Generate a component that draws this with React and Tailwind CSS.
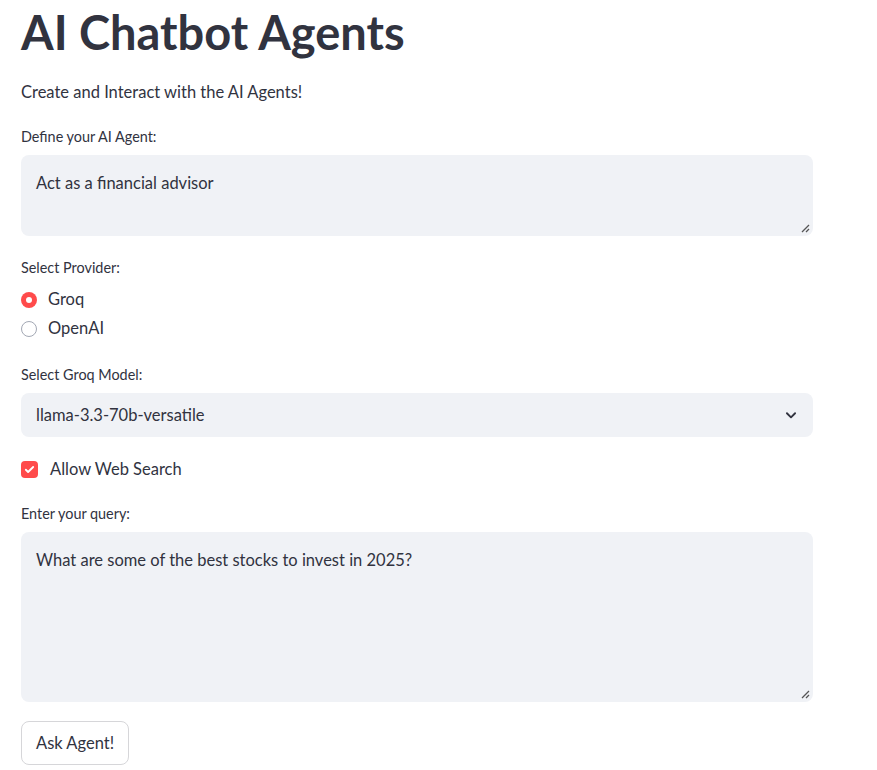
import { useState } from 'react'

const font = { fontFamily: '"Lato", "Open Sans", sans-serif' }

function Label({ children }) {
  return <div className="text-[14.4px] leading-[20px] text-[#31333F]">{children}</div>
}

function ResizeGrip() {
  return (
    <svg className="absolute bottom-[3px] right-[3px]" width="9" height="9" viewBox="0 0 9 9">
      <path d="M1 8 L8 1 M5 8 L8 5" stroke="#555" strokeWidth="1.3" fill="none" />
    </svg>
  )
}

function TextArea({ value, height }) {
  return (
    <div className={'relative w-full rounded-lg bg-[#F0F2F6] px-[15px] py-[16px] text-[16.5px] leading-[24px] text-[#31333F] ' + height}>
      {value}
      <ResizeGrip />
    </div>
  )
}

function Radio({ checked, label }) {
  return (
    <div className="flex h-[29px] items-center gap-[11px]">
      {checked ? (
        <span className="flex h-4 w-4 items-center justify-center rounded-full bg-[#FF4B4B]">
          <span className="h-[6px] w-[6px] rounded-full bg-white" />
        </span>
      ) : (
        <span className="h-4 w-4 rounded-full border border-[#a3a8b4] bg-white" />
      )}
      <span className="text-[16.5px] text-[#31333F]">{label}</span>
    </div>
  )
}

export default function App() {
  const [provider] = useState('Groq')
  const [webSearch] = useState(true)

  return (
    <div className="min-h-[770px] bg-white" style={font}>
      <div className="w-[813px] pl-[21px] pt-[2px]">
        <h1 className="text-[47px] font-bold leading-[60px] text-[#31333F]">
          AI Chatbot Agents
        </h1>
        <p className="mt-[17px] text-[16.5px] leading-[26px] text-[#31333F]">Create and Interact with the AI Agents!</p>

        <div className="mt-[22px]">
          <Label>Define your AI Agent:</Label>
          <div className="mt-[8px]">
            <TextArea value="Act as a financial advisor" height="h-[81px]" />
          </div>
        </div>

        <div className="mt-[22px]">
          <Label>Select Provider:</Label>
          <div className="mt-[7px]">
            <Radio checked={provider === 'Groq'} label="Groq" />
            <Radio checked={provider === 'OpenAI'} label="OpenAI" />
          </div>
        </div>

        <div className="mt-[22px]">
          <Label>Select Groq Model:</Label>
          <div className="mt-[8px] flex h-[44px] items-center justify-between rounded-lg bg-[#F0F2F6] pl-[15px] pr-[15px] text-[16.5px] text-[#31333F]">
            <span>llama-3.3-70b-versatile</span>
            <svg width="14" height="14" viewBox="0 0 24 24" fill="none" stroke="#31333F" strokeWidth="3.2" strokeLinecap="round" strokeLinejoin="round">
              <path d="M5 9l7 7 7-7" />
            </svg>
          </div>
        </div>

        <div className="mt-[20px] flex h-[24px] items-center gap-[12px]">
          <span className={'flex h-[17px] w-[17px] items-center justify-center rounded-[4px] ' + (webSearch ? 'bg-[#FF4B4B]' : 'border border-gray-400')}>
            <svg width="11" height="11" viewBox="0 0 24 24" fill="none" stroke="white" strokeWidth="4" strokeLinecap="round" strokeLinejoin="round">
              <path d="M4 12.5l5 5L20 6.5" />
            </svg>
          </span>
          <span className="text-[16.5px] text-[#31333F]">Allow Web Search</span>
        </div>

        <div className="mt-[23px]">
          <Label>Enter your query:</Label>
          <div className="mt-[8px]">
            <TextArea value="What are some of the best stocks to invest in 2025?" height="h-[170px]" />
          </div>
        </div>

        <button className="mt-[19px] h-[44px] rounded-lg border border-[#d6d6d9] bg-white px-[14px] text-[16.5px] text-[#31333F]">
          Ask Agent!
        </button>
      </div>
    </div>
  )
}
